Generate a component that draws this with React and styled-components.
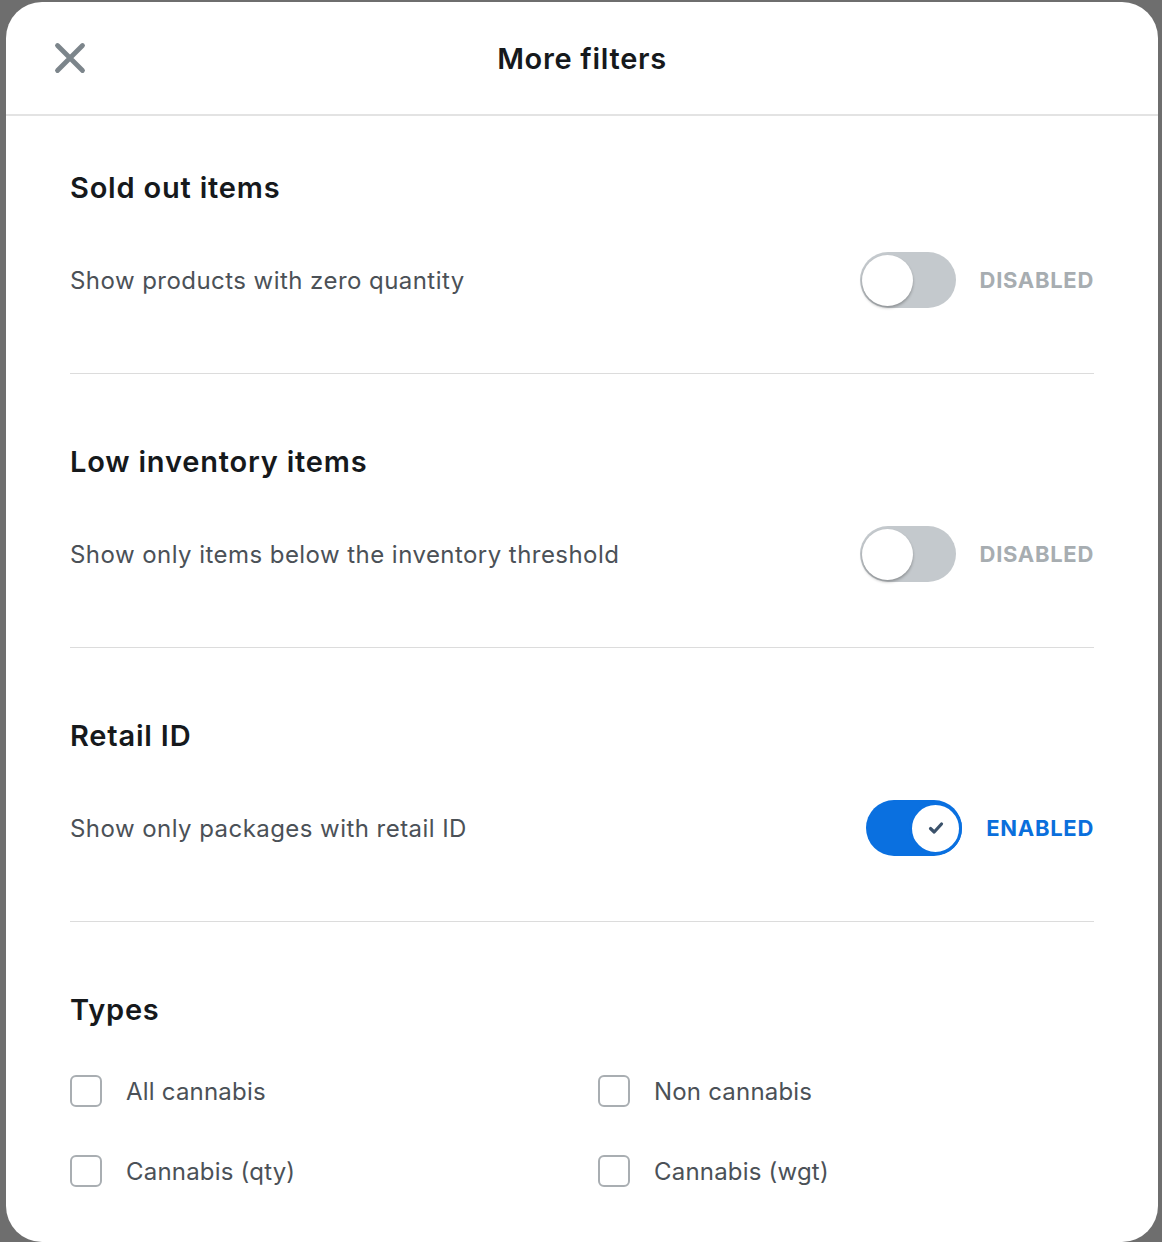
import React from "react"
import styled, { createGlobalStyle } from "styled-components"

const GlobalStyle = createGlobalStyle`
  html, body {
    margin: 0;
    padding: 0;
    background: #6e6e6e;
    font-family: Inter, "Noto Sans", sans-serif;
    -webkit-font-smoothing: antialiased;
  }
  * { box-sizing: border-box; }
`

const sections = [
  {
    title: "Sold out items",
    text: "Show products with zero quantity",
    enabled: false,
  },
  {
    title: "Low inventory items",
    text: "Show only items below the inventory threshold",
    enabled: false,
  },
  {
    title: "Retail ID",
    text: "Show only packages with retail ID",
    enabled: true,
  },
]

const types = ["All cannabis", "Non cannabis", "Cannabis (qty)", "Cannabis (wgt)"]

const CloseIcon = () => (
  <svg width="32" height="32" viewBox="0 0 32 32" fill="none">
    <path
      d="M3.5 3.5L28.5 28.5M28.5 3.5L3.5 28.5"
      stroke="#7c858b"
      strokeWidth="4.8"
      strokeLinecap="round"
    />
  </svg>
)

const CheckIcon = () => (
  <svg width="20" height="20" viewBox="0 0 20 20" fill="none">
    <path
      d="M4.5 10.5L8.2 14L15.5 6"
      stroke="#3b526b"
      strokeWidth="3.2"
      strokeLinecap="round"
      strokeLinejoin="round"
    />
  </svg>
)

const Toggle = ({ on }) => (
  <ToggleWrap>
    <Track on={on ? 1 : 0}>
      <Knob on={on ? 1 : 0}>{on && <CheckIcon />}</Knob>
    </Track>
    <StateLabel on={on ? 1 : 0}>{on ? "Enabled" : "Disabled"}</StateLabel>
  </ToggleWrap>
)

const App = () => {
  return (
    <>
      <GlobalStyle />
      <Backdrop>
        <Modal>
          <Header>
            <CloseButton aria-label="Close">
              <CloseIcon />
            </CloseButton>
            <HeaderTitle>More filters</HeaderTitle>
            <span />
          </Header>
          <Body>
            {sections.map((s) => (
              <Section key={s.title}>
                <SectionTitle>{s.title}</SectionTitle>
                <Row>
                  <RowText>{s.text}</RowText>
                  <Toggle on={s.enabled} />
                </Row>
              </Section>
            ))}
            <Section last>
              <SectionTitle>Types</SectionTitle>
              <CheckGrid>
                {types.map((t) => (
                  <CheckItem key={t}>
                    <Box />
                    <span>{t}</span>
                  </CheckItem>
                ))}
              </CheckGrid>
            </Section>
          </Body>
        </Modal>
      </Backdrop>
    </>
  )
}

const Backdrop = styled.div`
  min-height: 1242px;
  padding: 2px 4px 0 6px;
  overflow: hidden;
`

const Modal = styled.div`
  width: 1152px;
  height: 1240px;
  background: #fff;
  border-radius: 36px;
  overflow: hidden;
`

const Header = styled.div`
  height: 114px;
  display: grid;
  grid-template-columns: 1fr auto 1fr;
  align-items: center;
  border-bottom: 2px solid #e3e3e3;
`

const CloseButton = styled.button`
  justify-self: start;
  margin-left: 48px;
  margin-top: 0;
  padding: 0;
  border: none;
  background: none;
  display: flex;
  cursor: pointer;
`

const HeaderTitle = styled.h1`
  margin: 0;
  font-size: 29px;
  font-weight: 600;
  color: #16191c;
  letter-spacing: 0.7px;
`

const Body = styled.div`
  padding: 0 64px;
`

const Section = styled.section`
  padding: 70px 0 65px;
  border-bottom: ${(p) => (p.last ? "none" : "1px solid #dcdcdc")};
  &:first-child {
    padding-top: 54px;
  }
`

const SectionTitle = styled.h2`
  margin: 0;
  font-size: 29px;
  line-height: 36px;
  font-weight: 600;
  color: #16191c;
  letter-spacing: 0.8px;
`

const Row = styled.div`
  margin-top: 46px;
  display: flex;
  align-items: center;
  justify-content: space-between;
`

const RowText = styled.span`
  font-size: 24px;
  color: #4b5157;
  letter-spacing: 0.45px;
`

const ToggleWrap = styled.div`
  display: flex;
  align-items: center;
  gap: 24px;
`

const Track = styled.div`
  width: 96px;
  height: 56px;
  border-radius: 28px;
  background: ${(p) => (p.on ? "#0a70e0" : "#c4c9cd")};
  display: flex;
  align-items: center;
  justify-content: ${(p) => (p.on ? "flex-end" : "flex-start")};
  padding: 0 ${(p) => (p.on ? "0" : "2px")};
`

const Knob = styled.div`
  width: ${(p) => (p.on ? "53px" : "51px")};
  height: ${(p) => (p.on ? "53px" : "51px")};
  border-radius: 50%;
  background: #fff;
  border: ${(p) => (p.on ? "3px solid #0a70e0" : "none")};
  box-shadow: ${(p) => (p.on ? "none" : "0 2px 3px rgba(0, 0, 0, 0.28)")};
  display: flex;
  align-items: center;
  justify-content: center;
`

const StateLabel = styled.span`
  font-size: 22px;
  font-weight: 700;
  text-transform: uppercase;
  letter-spacing: 0.7px;
  color: ${(p) => (p.on ? "#0a6fdc" : "#a7adb1")};
`

const CheckGrid = styled.div`
  margin-top: 43px;
  display: grid;
  grid-template-columns: 1fr 1fr;
  column-gap: 32px;
  row-gap: 40px;
`

const CheckItem = styled.label`
  display: flex;
  align-items: center;
  gap: 24px;
  height: 40px;
  font-size: 24px;
  color: #4b5157;
  letter-spacing: 0.2px;
  cursor: pointer;
`

const Box = styled.span`
  width: 32px;
  height: 32px;
  border: 2px solid #a9aeb2;
  border-radius: 6px;
  flex-shrink: 0;
`

export default App
